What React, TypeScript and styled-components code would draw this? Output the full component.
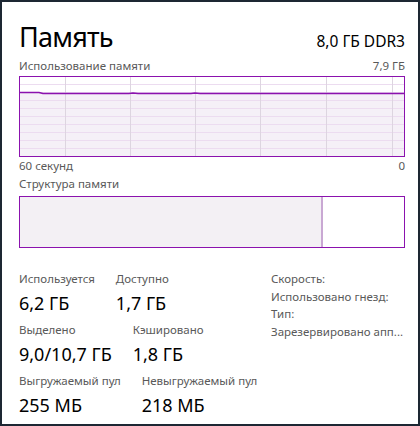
import React from "react";
import styled, { createGlobalStyle } from "styled-components";

const GlobalStyle = createGlobalStyle`
  html, body {
    margin: 0;
    padding: 0;
    background: #fff;
  }
  body {
    font-family: "Noto Sans", "Open Sans", sans-serif;
  }
`;

const PURPLE = "#8b12ae";

const Window = styled.div`
  box-sizing: border-box;
  width: 420px;
  height: 426px;
  border: 2px solid #1d2733;
  padding: 18px 13px 0 17px;
  background: #fff;
  color: #000;
  overflow: hidden;
`;

const Header = styled.div`
  display: flex;
  justify-content: space-between;
  align-items: baseline;
  height: 34px;
`;

const Title = styled.h1`
  margin: 0;
  font-size: 27px;
  line-height: 34px;
  font-weight: 400;
  letter-spacing: -0.8px;
`;

const Spec = styled.span`
  font-size: 15.5px;
  line-height: 20px;
`;

const Caption = styled.div<{ $gap?: number }>`
  display: flex;
  justify-content: space-between;
  margin-top: ${(p) => p.$gap ?? 0}px;
  font-size: 11.5px;
  line-height: 16px;
  color: #595959;
  white-space: nowrap;
`;

const ChartSvg = styled.svg`
  display: block;
  margin-top: 2px;
`;

const Composition = styled.div`
  box-sizing: border-box;
  display: flex;
  height: 52px;
  margin-top: 4px;
  border: 1px solid ${PURPLE};
`;

const InUse = styled.div<{ $share: number }>`
  width: ${(p) => p.$share}%;
  background: #f3f0f4;
  border-right: 2px solid #c9a8d3;
`;

const Stats = styled.div`
  display: flex;
  margin-top: 23px;
`;

const StatsMain = styled.div`
  display: flex;
  flex-direction: column;
  gap: 7px;
  width: 252px;
  flex: none;
`;

const StatRow = styled.div`
  display: flex;
  gap: 21px;
`;

const Stat = styled.div`
  display: flex;
  flex-direction: column;
  white-space: nowrap;
`;

const StatLabel = styled.span`
  font-size: 11.5px;
  line-height: 16px;
  color: #595959;
`;

const StatValue = styled.span`
  margin-top: 4px;
  font-size: 18px;
  line-height: 24px;
  color: #000;
`;

const Details = styled.div`
  display: flex;
  flex-direction: column;
  width: 140px;
  margin-top: -1px;
  font-size: 11.5px;
  line-height: 17.7px;
  color: #595959;
  white-space: nowrap;
`;

const W = 386;
const H = 81;

function UsageChart() {
  const rows = Array.from({ length: 9 }, (_, i) => 8 * (i + 1) + 0.5);
  const cols = [46, 111, 176, 241, 307, 373].map((x) => x + 0.5);
  const line =
    "M1 16.5 L20 16.5 L24 17.5 L110 17.5 L114 17 L119 17.5 L172 17.5 L176 17 L181 17.5 L385 17.5";
  return (
    <ChartSvg width={W} height={H} viewBox={`0 0 ${W} ${H}`}>
      <path d={`${line} L385 80 L1 80 Z`} fill="#f5f0f7" />
      {rows.map((y) => (
        <line key={y} x1={1} x2={W - 1} y1={y} y2={y} stroke="#ecdcf0" strokeWidth={1} />
      ))}
      {cols.map((x) => (
        <line key={x} x1={x} x2={x} y1={1} y2={H - 1} stroke="#ddd5e0" strokeWidth={1} />
      ))}
      <path d={line} fill="none" stroke={PURPLE} strokeWidth={1.5} />
      <rect x={0.5} y={0.5} width={W - 1} height={H - 1} fill="none" stroke={PURPLE} strokeWidth={1} />
    </ChartSvg>
  );
}

const statRows = [
  [
    ["Используется", "6,2 ГБ"],
    ["Доступно", "1,7 ГБ"],
  ],
  [
    ["Выделено", "9,0/10,7 ГБ"],
    ["Кэшировано", "1,8 ГБ"],
  ],
  [
    ["Выгружаемый пул", "255 МБ"],
    ["Невыгружаемый пул", "218 МБ"],
  ],
];

const details = ["Скорость:", "Использовано гнезд:", "Тип:", "Зарезервировано апп..."];

export default function App() {
  return (
    <>
      <GlobalStyle />
      <Window>
        <Header>
          <Title>Память</Title>
          <Spec>8,0 ГБ DDR3</Spec>
        </Header>
        <Caption $gap={4}>
          <span>Использование памяти</span>
          <span>7,9 ГБ</span>
        </Caption>
        <UsageChart />
        <Caption $gap={1}>
          <span>60 секунд</span>
          <span>0</span>
        </Caption>
        <Caption $gap={2}>
          <span>Структура памяти</span>
        </Caption>
        <Composition>
          <InUse $share={78.5} />
        </Composition>
        <Stats>
          <StatsMain>
            {statRows.map((row, i) => (
              <StatRow key={i}>
                {row.map(([label, value]) => (
                  <Stat key={label}>
                    <StatLabel>{label}</StatLabel>
                    <StatValue>{value}</StatValue>
                  </Stat>
                ))}
              </StatRow>
            ))}
          </StatsMain>
          <Details>
            {details.map((d) => (
              <span key={d}>{d}</span>
            ))}
          </Details>
        </Stats>
      </Window>
    </>
  );
}
